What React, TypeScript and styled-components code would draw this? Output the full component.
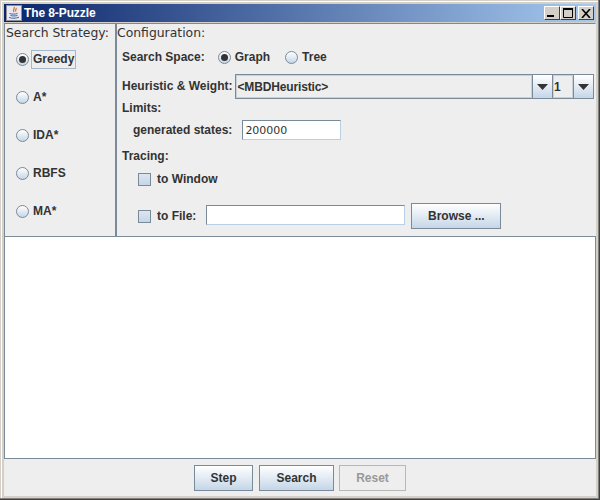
import React from 'react';
import styled, { createGlobalStyle } from 'styled-components';

const GlobalStyle = createGlobalStyle`
  html, body {
    margin: 0;
    padding: 0;
    width: 600px;
    height: 500px;
    overflow: hidden;
    background: #d4d0c8;
  }
  * { box-sizing: border-box; }
`;

const strategies = ['Greedy', 'A*', 'IDA*', 'RBFS', 'MA*'];

function Radio({ checked }: { checked?: boolean }) {
  return <RadioCircle>{checked && <RadioDot />}</RadioCircle>;
}

function Arrow() {
  return (
    <svg width="11" height="6" viewBox="0 0 11 6">
      <path d="M0 0h11L5.5 6z" fill="#333" />
    </svg>
  );
}

function JavaIcon() {
  return (
    <svg width="16" height="16" viewBox="0 0 16 16">
      <rect x="0.5" y="0.5" width="15" height="15" fill="#e8e8ee" stroke="#8d8d9a" />
      <path d="M8 2c1.5 1.5-2 3 0 5M10 3c1 1-1.5 2 0 3.500" fill="none" stroke="#e2661a" strokeWidth="1.2" />
      <path d="M3.500 8.500c2 .8 6 .8 8 0M4.500 10.500c2 .6 5 .6 7 0M3 12.500c3 1 7 1 10-.3" fill="none" stroke="#3c66a8" strokeWidth="1" />
    </svg>
  );
}

export default function App() {
  return (
    <Window>
      <GlobalStyle />
      <TitleBar>
        <JavaIcon />
        <Title>The 8-Puzzle</Title>
        <WindowButtons>
          <WindowButton>
            <svg width="10" height="10" viewBox="0 0 10 10"><rect x="0" y="7" width="7" height="2" fill="#000" /></svg>
          </WindowButton>
          <WindowButton>
            <svg width="11" height="10" viewBox="0 0 11 10"><path d="M.5 1.500h9v8h-9z" fill="none" stroke="#000" /><rect x="0" y="0" width="10" height="2" fill="#000" /></svg>
          </WindowButton>
          <CloseButton>
            <svg width="10" height="9" viewBox="0 0 10 9"><path d="M1 0l8 9M9 0L1 9" stroke="#000" strokeWidth="1.600" /></svg>
          </CloseButton>
        </WindowButtons>
      </TitleBar>
      <Content>
        <TopRow>
          <StrategyPanel>
            <PanelTitle>Search Strategy:</PanelTitle>
            <StrategyList>
              {strategies.map((name, i) => (
                <StrategyRow key={name}>
                  <Radio checked={i === 0} />
                  <OptionLabel $focused={i === 0}>{name}</OptionLabel>
                </StrategyRow>
              ))}
            </StrategyList>
          </StrategyPanel>
          <ConfigPanel>
            <ConfigTitle>Configuration:</ConfigTitle>
            <ConfigBody>
              <SpaceRow>
                <Label>Search Space:</Label>
                <RadioPair><Radio checked /><Label>Graph</Label></RadioPair>
                <RadioPair><Radio /><Label>Tree</Label></RadioPair>
              </SpaceRow>
              <HeuristicRow>
                <Label>Heuristic &amp; Weight:</Label>
                <Combo>
                  <ComboValue $grow>&lt;MBDHeuristic&gt;</ComboValue>
                  <ComboArrow><Arrow /></ComboArrow>
                  <ComboValue>1</ComboValue>
                  <ComboArrow><Arrow /></ComboArrow>
                </Combo>
              </HeuristicRow>
              <Label>Limits:</Label>
              <LimitsRow>
                <Label>generated states:</Label>
                <TextField $width={99}>200000</TextField>
              </LimitsRow>
              <TracingLabel>Tracing:</TracingLabel>
              <WindowTraceRow>
                <CheckBox />
                <Label>to Window</Label>
              </WindowTraceRow>
              <FileRow>
                <CheckBox />
                <FileLabel>to File:</FileLabel>
                <FileField $width={199} />
                <BrowseButton>Browse ...</BrowseButton>
              </FileRow>
            </ConfigBody>
          </ConfigPanel>
        </TopRow>
        <OutputArea />
        <ButtonBar>
          <ActionButton $width={59}>Step</ActionButton>
          <ActionButton $width={75}>Search</ActionButton>
          <ActionButton $width={67} disabled>Reset</ActionButton>
        </ButtonBar>
      </Content>
    </Window>
  );
}

const Window = styled.div`
  width: 600px;
  height: 500px;
  display: flex;
  flex-direction: column;
  padding: 4px 4px 4px 4px;
  background: #d4d0c8;
  box-shadow: inset -1px -1px #404040, inset -2px -2px #808080, inset 1px 1px #d4d0c8, inset 2px 2px #fff;
  font-family: 'Liberation Sans', Arial, sans-serif;
`;

const TitleBar = styled.div`
  height: 18px;
  flex: none;
  display: flex;
  align-items: center;
  gap: 2px;
  padding: 0 2px 0 2px;
  background: linear-gradient(90deg, #0a246a, #a6caf0);
`;

const Title = styled.span`
  color: #fff;
  font-size: 12px;
  font-weight: 700;
  letter-spacing: -0.1px;
`;

const WindowButtons = styled.div`
  margin-left: auto;
  display: flex;
`;

const WindowButton = styled.div`
  width: 16px;
  height: 14px;
  display: flex;
  align-items: center;
  justify-content: center;
  background: #d4d0c8;
  border: 1px solid;
  border-color: #fff #404040 #404040 #fff;
`;

const CloseButton = styled(WindowButton)`
  margin-left: 2px;
`;

const Content = styled.div`
  flex: 1;
  min-height: 0;
  margin-top: 1px;
  display: flex;
  flex-direction: column;
  background: #eeeeee;
`;

const TopRow = styled.div`
  display: flex;
  height: 213px;
  flex: none;
`;

const StrategyPanel = styled.div`
  width: 113px;
  flex: none;
  border: 1px solid #7a8a99;
  border-width: 1px 2px 0 1px;
`;

const ConfigPanel = styled.div`
  flex: 1;
  min-width: 0;
  border-top: 1px solid #7a8a99;
  border-right: 1px solid #eeeeee;
`;

const PanelTitle = styled.div`
  font-family: 'DejaVu Sans', sans-serif;
  font-size: 12.4px;
  line-height: 15px;
  color: #333333;
  white-space: nowrap;
  padding: 1px 0 0 1px;
`;

const ConfigTitle = styled(PanelTitle)`
  padding-left: 0;
`;

const StrategyList = styled.div`
  display: flex;
  flex-direction: column;
  gap: 16px;
  padding: 8px 0 0 11px;
`;

const StrategyRow = styled.div`
  display: flex;
  align-items: center;
  height: 22px;
  gap: 2px;
`;

const RadioCircle = styled.span`
  width: 13px;
  height: 13px;
  flex: none;
  display: flex;
  align-items: center;
  justify-content: center;
  border-radius: 50%;
  border: 1px solid #7a8a99;
  background: linear-gradient(180deg, #ffffff, #c5d6e8);
`;

const RadioDot = styled.span`
  width: 7px;
  height: 7px;
  border-radius: 50%;
  background: #333333;
`;

const Label = styled.span`
  font-size: 12px;
  font-weight: 700;
  line-height: 15px;
  color: #333333;
  white-space: nowrap;
`;

const OptionLabel = styled(Label)<{ $focused?: boolean }>`
  padding: 1px;
  border: 1px solid ${(p) => (p.$focused ? '#a3b8cc' : 'transparent')};
`;

const ConfigBody = styled.div`
  display: flex;
  flex-direction: column;
  align-items: flex-start;
  padding: 6px 0 0 5px;
`;

const SpaceRow = styled.div`
  display: flex;
  align-items: center;
  height: 22px;
  & > span:first-child { margin-right: 13px; }
`;

const RadioPair = styled.span`
  display: flex;
  align-items: center;
  gap: 4px;
  margin-right: 15px;
`;

const HeuristicRow = styled.div`
  display: flex;
  align-items: center;
  width: 472px;
  margin-top: 6px;
  margin-bottom: 2px;
  gap: 3px;
`;

const Combo = styled.div`
  flex: 1;
  height: 25px;
  display: flex;
  background: #7a8a99;
  border: 1px solid #7a8a99;
  gap: 1px;
`;

const ComboValue = styled.div<{ $grow?: boolean }>`
  ${(p) => (p.$grow ? 'flex: 1;' : 'width: 20px;')}
  display: flex;
  align-items: center;
  background: #eeeeee;
  border: 1px solid #c8d0d8;
  font-size: 12px;
  font-weight: 700;
  letter-spacing: -0.15px;
  color: #333333;
`;

const ComboArrow = styled.div`
  width: 19px;
  display: flex;
  align-items: center;
  justify-content: center;
  background: linear-gradient(180deg, #ffffff, #c5d6e8);
`;

const LimitsRow = styled.div`
  display: flex;
  align-items: center;
  gap: 10px;
  padding-left: 11px;
  margin-top: 4px;
`;

const TextField = styled.div<{ $width: number }>`
  width: ${(p) => p.$width}px;
  height: 20px;
  padding-left: 2px;
  display: flex;
  align-items: center;
  background: #fff;
  border: 1px solid;
  border-color: #7a8a99 #b8cfe5 #b8cfe5 #7a8a99;
  font-family: 'DejaVu Sans', sans-serif;
  font-size: 11px;
  color: #333333;
`;

const FileField = styled(TextField)`
  margin-bottom: 2px;
`;

const TracingLabel = styled(Label)`
  margin-top: 9px;
`;

const WindowTraceRow = styled.div`
  display: flex;
  align-items: center;
  gap: 6px;
  padding-left: 16px;
  margin-top: 8px;
`;

const FileRow = styled.div`
  display: flex;
  align-items: center;
  padding-left: 16px;
  margin-top: 16px;
`;

const FileLabel = styled(Label)`
  margin: 0 10px 0 6px;
`;

const CheckBox = styled.span`
  width: 13px;
  height: 13px;
  flex: none;
  border: 1px solid #7a8a99;
  background: linear-gradient(180deg, #dce6f0, #c5d6e8);
`;

const GradientButton = styled.button`
  font-family: 'Liberation Sans', Arial, sans-serif;
  font-size: 12px;
  font-weight: 700;
  color: #333333;
  padding: 0;
  border: 1px solid #7a8a99;
  background: linear-gradient(180deg, #ffffff, #c5d6e8);
`;

const BrowseButton = styled(GradientButton)`
  width: 90px;
  height: 26px;
  margin-left: 6px;
`;

const OutputArea = styled.div`
  height: 223px;
  flex: none;
  background: #fff;
  border: 1px solid #7a8a99;
`;

const ButtonBar = styled.div`
  flex: 1;
  display: flex;
  justify-content: center;
  align-items: center;
  gap: 5px;
`;

const ActionButton = styled(GradientButton)<{ $width: number }>`
  width: ${(p) => p.$width}px;
  height: 26px;
  &:first-child { margin-right: 1px; }
  &:disabled {
    background: #eeeeee;
    color: #999999;
    border-color: #b8b8b8;
  }
`;
